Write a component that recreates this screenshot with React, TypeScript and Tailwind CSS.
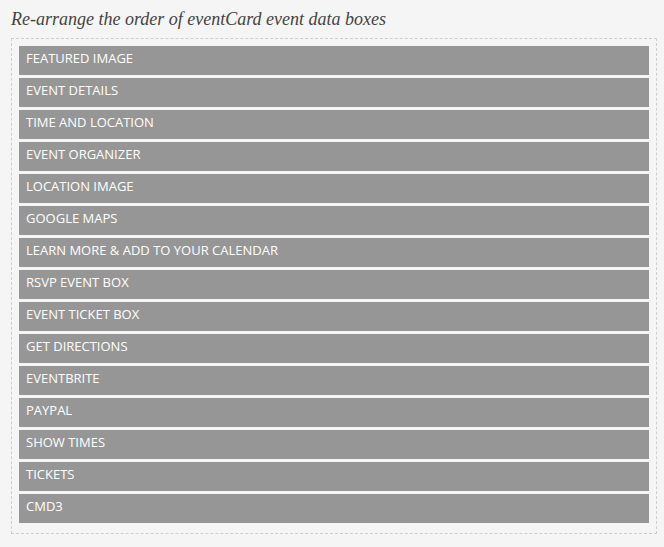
const boxes = [
  "FEATURED IMAGE",
  "EVENT DETAILS",
  "TIME AND LOCATION",
  "EVENT ORGANIZER",
  "LOCATION IMAGE",
  "GOOGLE MAPS",
  "LEARN MORE & ADD TO YOUR CALENDAR",
  "RSVP EVENT BOX",
  "EVENT TICKET BOX",
  "GET DIRECTIONS",
  "EVENTBRITE",
  "PAYPAL",
  "SHOW TIMES",
  "TICKETS",
  "CMD3",
];

export default function App() {
  return (
    <div className="min-h-[547px] w-[664px] bg-[#f5f5f5] pl-[11px] pt-[8px]">
      <h3 className="mb-[8px] font-['Liberation_Serif',serif] text-[18px] italic leading-[22px] text-[#444]">
        Re-arrange the order of eventCard event data boxes
      </h3>
      <div className="w-[646px] border border-dashed border-[#cfcfcf] px-[7px] pb-[7px] pt-[7px]">
        {boxes.map((name) => (
          <div
            key={name}
            className="mb-[3px] flex h-[29px] items-center bg-[#969696] pb-[4px] pl-[7px] font-['Open_Sans',sans-serif] text-[13px] leading-none text-white"
          >
            {name}
          </div>
        ))}
      </div>
    </div>
  );
}
